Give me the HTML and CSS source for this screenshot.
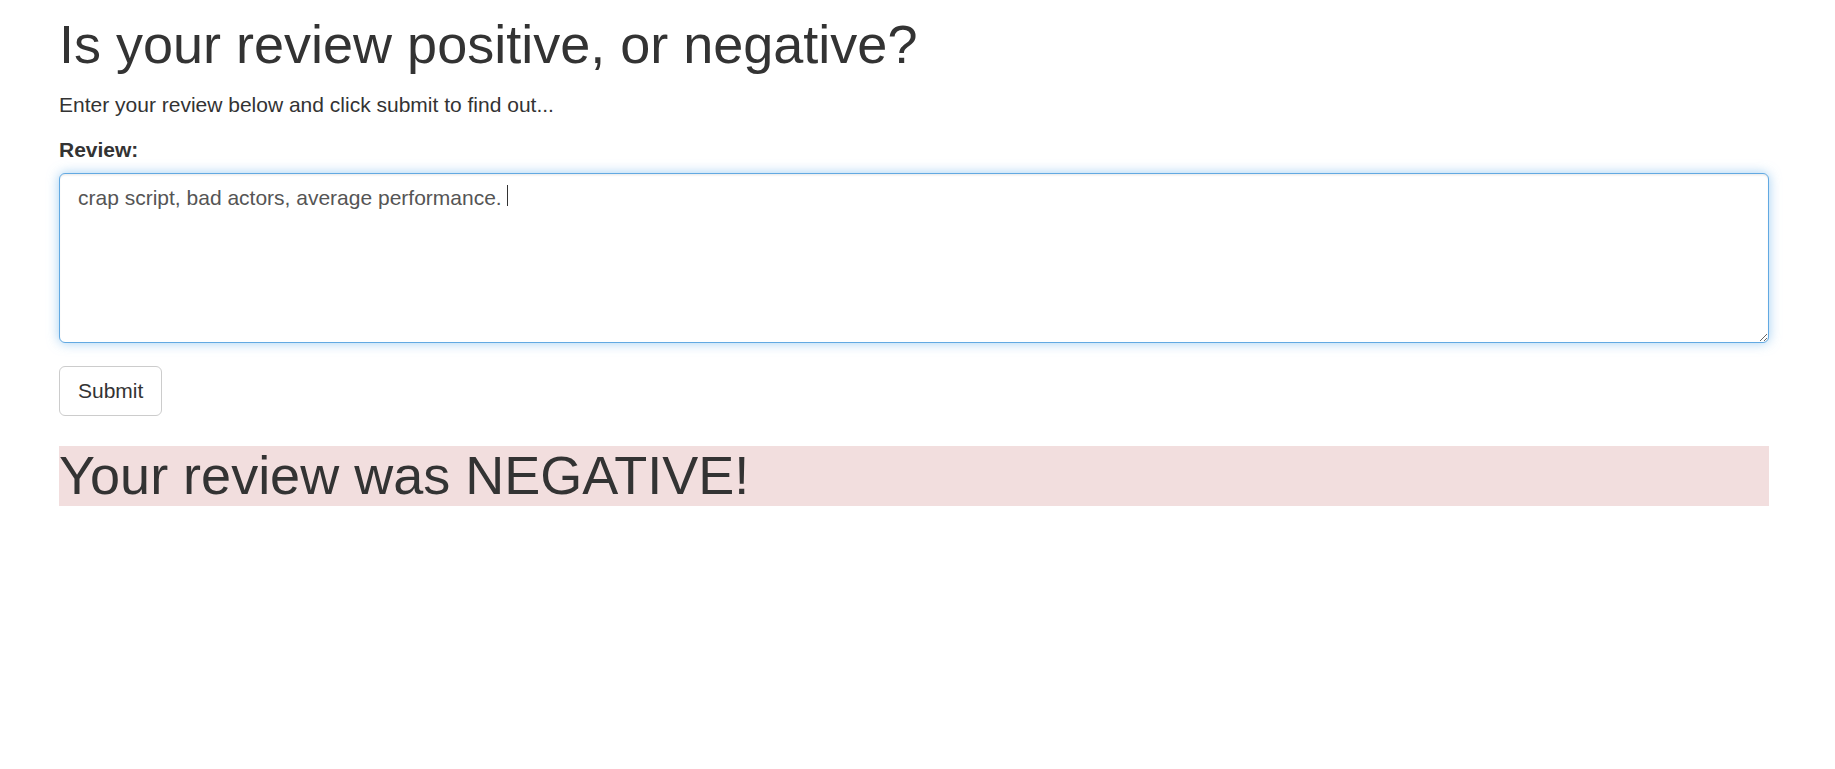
FILE: index.html
```html
<!DOCTYPE html>
<html lang="en">
<head>
<meta charset="utf-8">
<title>Review Sentiment</title>
<link rel="stylesheet" href="styles.css">
</head>
<body>
<div class="container">
  <h1 class="title">Is your review positive, or negative?</h1>
  <p class="lead-text">Enter your review below and click submit to find out...</p>
  <form class="review-form">
    <div class="form-group">
      <label class="form-label" for="review">Review:</label>
      <div class="field-wrap">
        <textarea id="review" class="form-control is-focused" rows="5">crap script, bad actors, average performance. </textarea>
        <span class="caret-line"></span>
      </div>
    </div>
    <button type="button" class="btn">Submit</button>
  </form>
  <h1 class="result bg-danger">Your review was NEGATIVE!</h1>
</div>
</body>
</html>
```

FILE: styles.css
```css
* { box-sizing: border-box; }
html, body { margin: 0; padding: 0; background: #fff; }
body {
  font-family: "Liberation Sans", Arial, Helvetica, sans-serif;
  font-size: 21px;
  line-height: 30px;
  color: #333;
}
.container {
  width: 1710px;
  margin-left: 59px;
}
.title {
  font-size: 54px;
  font-weight: 500;
  line-height: 59.4px;
  margin: 15px 0 16px;
  color: #333;
}
.lead-text {
  margin: 0 0 15px;
}
.review-form { margin: 0; }
.form-group { margin-bottom: 23px; }
.form-label {
  display: inline-block;
  font-weight: bold;
  margin-bottom: 8px;
}
.field-wrap { position: relative; }
.form-control {
  display: block;
  width: 100%;
  height: 170px;
  padding: 9px 18px;
  font-family: inherit;
  font-size: 21px;
  line-height: 30px;
  color: #555;
  background: #fff;
  border: 1.5px solid #5fa8e0;
  border-radius: 6px;
  resize: vertical;
  margin: 0;
  caret-color: transparent;
}
.form-control.is-focused {
  border-color: #62a9e2;
  outline: 0;
  box-shadow: inset 0 1.5px 1.5px rgba(0,0,0,.075), 0 0 12px rgba(102,175,233,.6);
}
.caret-line {
  position: absolute;
  left: 448px;
  top: 12px;
  width: 1px;
  height: 21px;
  background: #333;
}
.btn {
  display: inline-block;
  font-family: inherit;
  font-size: 21px;
  line-height: 30px;
  padding: 9px 18px;
  color: #333;
  background: #fff;
  border: 1.5px solid #ccc;
  border-radius: 6px;
  margin: 0;
  cursor: pointer;
}
.result {
  font-size: 54px;
  font-weight: 500;
  line-height: 59.4px;
  margin: 30px 0 0;
  color: #333;
}
.bg-danger { background-color: #f2dede; }
```
